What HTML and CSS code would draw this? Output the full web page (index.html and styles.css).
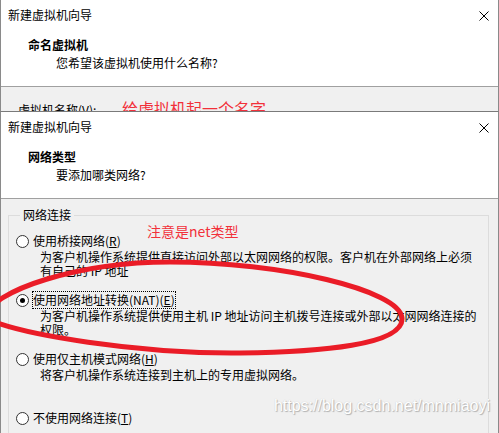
FILE: index.html
```html
<!DOCTYPE html>
<html lang="zh-CN">
<head>
  <meta charset="UTF-8">
  <title>新建虚拟机向导</title>
  <link rel="stylesheet" href="styles.css">
</head>
<body>

  <div class="dialog dialog-clipped">
    <div class="dialog-head">
      <div class="title-row">
        <span class="title">新建虚拟机向导</span>
        <svg class="close" width="10" height="10" viewBox="0 0 10 10"><path d="M0.5 0.5 L9.5 9.5 M9.5 0.5 L0.5 9.5" stroke="#000" stroke-width="1"/></svg>
      </div>
      <h2 class="step">命名虚拟机</h2>
      <p class="step-sub">您希望该虚拟机使用什么名称?</p>
    </div>
    <div class="dialog-body">
      <div class="name-row">
        <span class="name-label">虚拟机名称(<u>V</u>):</span>
        <span class="note note-big">给虚拟机起一个名字</span>
      </div>
    </div>
  </div>

  <div class="dialog">
    <div class="dialog-head">
      <div class="title-row">
        <span class="title">新建虚拟机向导</span>
        <svg class="close" width="10" height="10" viewBox="0 0 10 10"><path d="M0.5 0.5 L9.5 9.5 M9.5 0.5 L0.5 9.5" stroke="#000" stroke-width="1"/></svg>
      </div>
      <h2 class="step">网络类型</h2>
      <p class="step-sub">要添加哪类网络?</p>
    </div>
    <div class="dialog-body">
      <fieldset class="group">
        <legend>网络连接</legend>
        <span class="note note-small">注意是net类型</span>

        <div class="option">
          <div class="option-row"><span class="radio"></span><span class="option-label">使用桥接网络(<u>R</u>)</span></div>
          <p class="option-desc">为客户机操作系统提供直接访问外部以太网网络的权限。客户机在外部网络上必须<br>有自己的 IP 地址</p>
        </div>

        <div class="option">
          <div class="option-row"><span class="radio checked"></span><span class="option-label focused">使用网络地址转换(NAT)(<u>E</u>)</span></div>
          <p class="option-desc">为客户机操作系统提供使用主机 IP 地址访问主机拨号连接或外部以太网网络连接的<br>权限。</p>
        </div>

        <div class="option">
          <div class="option-row"><span class="radio"></span><span class="option-label">使用仅主机模式网络(<u>H</u>)</span></div>
          <p class="option-desc">将客户机操作系统连接到主机上的专用虚拟网络。</p>
        </div>

        <div class="option">
          <div class="option-row"><span class="radio"></span><span class="option-label">不使用网络连接(<u>T</u>)</span></div>
        </div>
      </fieldset>
    </div>
  </div>

  <!-- hand-drawn marker circle over the NAT option -->
  <svg class="scribble" width="499" height="433" viewBox="0 0 499 433">
    <path d="M -15 318 C -10 290, 80 262, 170 262 C 280 262, 400 290, 402 318 C 404 345, 320 352, 240 353 C 140 354, 20 335, -15 318 Z" fill="none" stroke="#ea1c27" stroke-width="5"/>
  </svg>

  <div class="watermark">https://blog.csdn.net/mnmiaoyi</div>

</body>
</html>
```

FILE: styles.css
```css
html, body {
  margin: 0;
  padding: 0;
}

body {
  width: 499px;
  height: 433px;
  overflow: hidden;
  position: relative;
  background: #f0f0f0;
  font-family: "Noto Sans CJK SC", "Microsoft YaHei", sans-serif;
  font-size: 12px;
  line-height: 16px;
  color: #000;
}

.dialog {
  box-sizing: border-box;
  width: 499px;
  border-left: 1px solid #8a8a8a;
  border-right: 1px solid #8a8a8a;
  border-top: 1px solid #7a7a7a;
  background: #f0f0f0;
}

.dialog-clipped {
  border-top: none;
  height: 111px;
  overflow: hidden;
}

.dialog-head {
  height: 87px;
  box-sizing: border-box;
  background: #fff;
  border-bottom: 1px solid #a0a0a0;
  padding: 7px 9px 0 7px;
}

.title-row {
  display: flex;
  justify-content: space-between;
  align-items: center;
}

.close {
  margin-top: 1px;
}

.step {
  margin: 14px 0 0 20px;
  font-size: 12px;
  line-height: 16px;
  font-weight: bold;
}

.step-sub {
  margin: 2px 0 0 48px;
}

.name-row {
  display: flex;
  align-items: flex-start;
  padding: 15px 0 0 17px;
}

.name-label {
  width: 104px;
}

.note {
  color: #f2303a;
}

.note-big {
  font-size: 16px;
  line-height: 18px;
  margin-top: -3px;
}

.group {
  position: relative;
  margin: 8px 9px 0 7px;
  padding: 10px 0 40px 7px;
  border: 1px solid #dcdcdc;
  display: flex;
  flex-direction: column;
  gap: 14px;
}

.group legend {
  padding: 0 3px;
  margin-left: 4px;
  line-height: 16px;
}

.note-small {
  position: absolute;
  left: 138px;
  top: 0;
  font-size: 14px;
  line-height: 16px;
}

.option {
  min-height: 45px;
}

.option-row {
  display: flex;
  align-items: center;
  gap: 4px;
}

.radio {
  box-sizing: border-box;
  width: 13px;
  height: 13px;
  border: 1px solid #333;
  border-radius: 50%;
  background: #fff;
  display: flex;
  align-items: center;
  justify-content: center;
}

.radio.checked::after {
  content: "";
  width: 5px;
  height: 5px;
  border-radius: 50%;
  background: #000;
}

.option-label.focused {
  outline: 1px dotted #000;
  outline-offset: 0;
}

.option-desc {
  margin: 1px 0 0 24px;
  line-height: 14px;
}

.scribble {
  position: absolute;
  left: 0;
  top: 0;
  pointer-events: none;
}

.watermark {
  position: absolute;
  right: 9px;
  top: 398px;
  font-family: "Liberation Sans", Arial, sans-serif;
  font-size: 16px;
  color: #ffffff;
  text-shadow: 1px 1px 1px #b0b0b0, 0 0 1px #c4c4c4;
}
```
